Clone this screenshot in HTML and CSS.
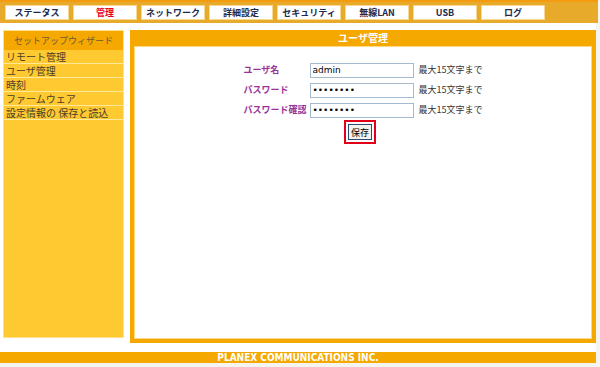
FILE: index.html
```html
<!DOCTYPE html>
<html lang="ja">
<head>
    <meta charset="UTF-8">
    <title>ユーザ管理</title>
    <link rel="stylesheet" href="styles.css">
</head>
<body>
<div id="wrap">
    <div id="head">
        <ul id="menu">
            <li>ステータス</li>
            <li class="on">管理</li>
            <li>ネットワーク</li>
            <li>詳細設定</li>
            <li>セキュリティ</li>
            <li>無線LAN</li>
            <li>USB</li>
            <li>ログ</li>
        </ul>
    </div>
    <div id="main">
        <div id="side">
            <div class="side-title">セットアップウィザード</div>
            <ul>
                <li>リモート管理</li>
                <li>ユーザ管理</li>
                <li>時刻</li>
                <li>ファームウェア</li>
                <li>設定情報の 保存と読込</li>
            </ul>
        </div>
        <div id="panel">
            <div class="panel-title">ユーザ管理</div>
            <div class="panel-body">
                <table class="form">
                    <tr>
                        <th>ユーザ名</th>
                        <td><input type="text" value="admin"></td>
                        <td class="hint">最大15文字まで</td>
                    </tr>
                    <tr>
                        <th>パスワード</th>
                        <td><input type="password" value="password"></td>
                        <td class="hint">最大15文字まで</td>
                    </tr>
                    <tr>
                        <th>パスワード確認</th>
                        <td><input type="password" value="password"></td>
                        <td class="hint">最大15文字まで</td>
                    </tr>
                </table>
                <div class="save"><button type="button">保存</button></div>
            </div>
        </div>
    </div>
    <div id="foot">PLANEX COMMUNICATIONS INC.</div>
</div>
</body>
</html>
```
FILE: styles.css
```css
*{ margin:0; padding:0;}
body{
    background:#f4f4f0;
    font-family:"Noto Sans CJK JP","DejaVu Sans",sans-serif;
    font-size:10px;
}
li{ list-style:none; white-space:nowrap;}
#wrap{
    width:596px;
    height:363px;
    background:#fff;
}
#head{
    height:23px;
    border-top:2px solid #f39c12;
    background:#e8aa2a;
    box-sizing:border-box;
    width:598px;
}
#menu{
    display:flex;
    gap:4px;
    padding:3px 0 0 5px;
}
#menu li{
    width:62px;
    height:13px;
    line-height:13px;
    background:#fff;
    border:1px solid #f6d890;
    text-align:center;
    font-size:9px;
    font-weight:bold;
    color:#1b2a4e;
}
#menu li.on{ color:#e8001c;}
#main{
    display:flex;
    align-items:flex-start;
    gap:6px;
    padding:7px 0 0 3px;
}
#side{
    width:119px;
    height:306px;
    background:#fec931;
    border:1px solid #ffe28c;
}
.side-title{
    height:19px;
    line-height:19px;
    background:#f5a800;
    color:#6b5a3a;
    text-align:center;
    font-size:9px;
    white-space:nowrap;
}
#side ul li{
    height:13px;
    line-height:13px;
    border-bottom:1px solid #ffe89a;
    padding-left:2px;
    font-size:10px;
    color:#4a3e2a;
    overflow:hidden;
}
#panel{
    width:458px;
    height:309px;
    border:4px solid #f5a800;
    border-top:0;
    background:#f5a800;
    display:flex;
    flex-direction:column;
}
.panel-title{
    height:16px;
    line-height:15px;
    text-align:center;
    color:#fff;
    font-weight:bold;
    font-size:10px;
}
.panel-body{
    flex:1;
    background:#fff;
    border:1px solid #ffd880;
    padding-top:13px;
}
.form{
    margin:0 auto;
    border-collapse:collapse;
}
.form th{
    text-align:left;
    color:#993399;
    font-size:9px;
    font-weight:bold;
    width:66px;
    height:20px;
    line-height:20px;
    padding:0;
    white-space:nowrap;
}
.form td{ padding:0; height:20px; line-height:20px;}
.form input{
    display:block;
    width:104px;
    height:15px;
    border:1px solid #a5b9cf;
    font-family:"DejaVu Sans",sans-serif;
    font-size:9px;
    padding:0 2px;
    box-sizing:border-box;
    color:#000;
}
.form .hint{
    padding-left:5px;
    width:62px;
    font-size:9px;
    color:#333;
    white-space:nowrap;
}
.save{
    display:flex;
    justify-content:center;
    padding-top:4px;
    position:relative;
    left:-3px;
}
.save button{
    width:24px;
    height:16px;
    font-family:"Noto Sans CJK JP",sans-serif;
    font-size:9px;
    line-height:11px;
    background:#f2f1ec;
    border:1px solid #2e4a77;
    border-radius:0;
    outline:2px solid #e0001a;
    outline-offset:2px;
}
#foot{
    margin-top:9px;
    height:11px;
    line-height:11px;
    background:#f5a800;
    color:#fff;
    text-align:center;
    font-family:"DejaVu Sans Condensed","DejaVu Sans",sans-serif;
    font-weight:bold;
    font-size:10px;
}
```
